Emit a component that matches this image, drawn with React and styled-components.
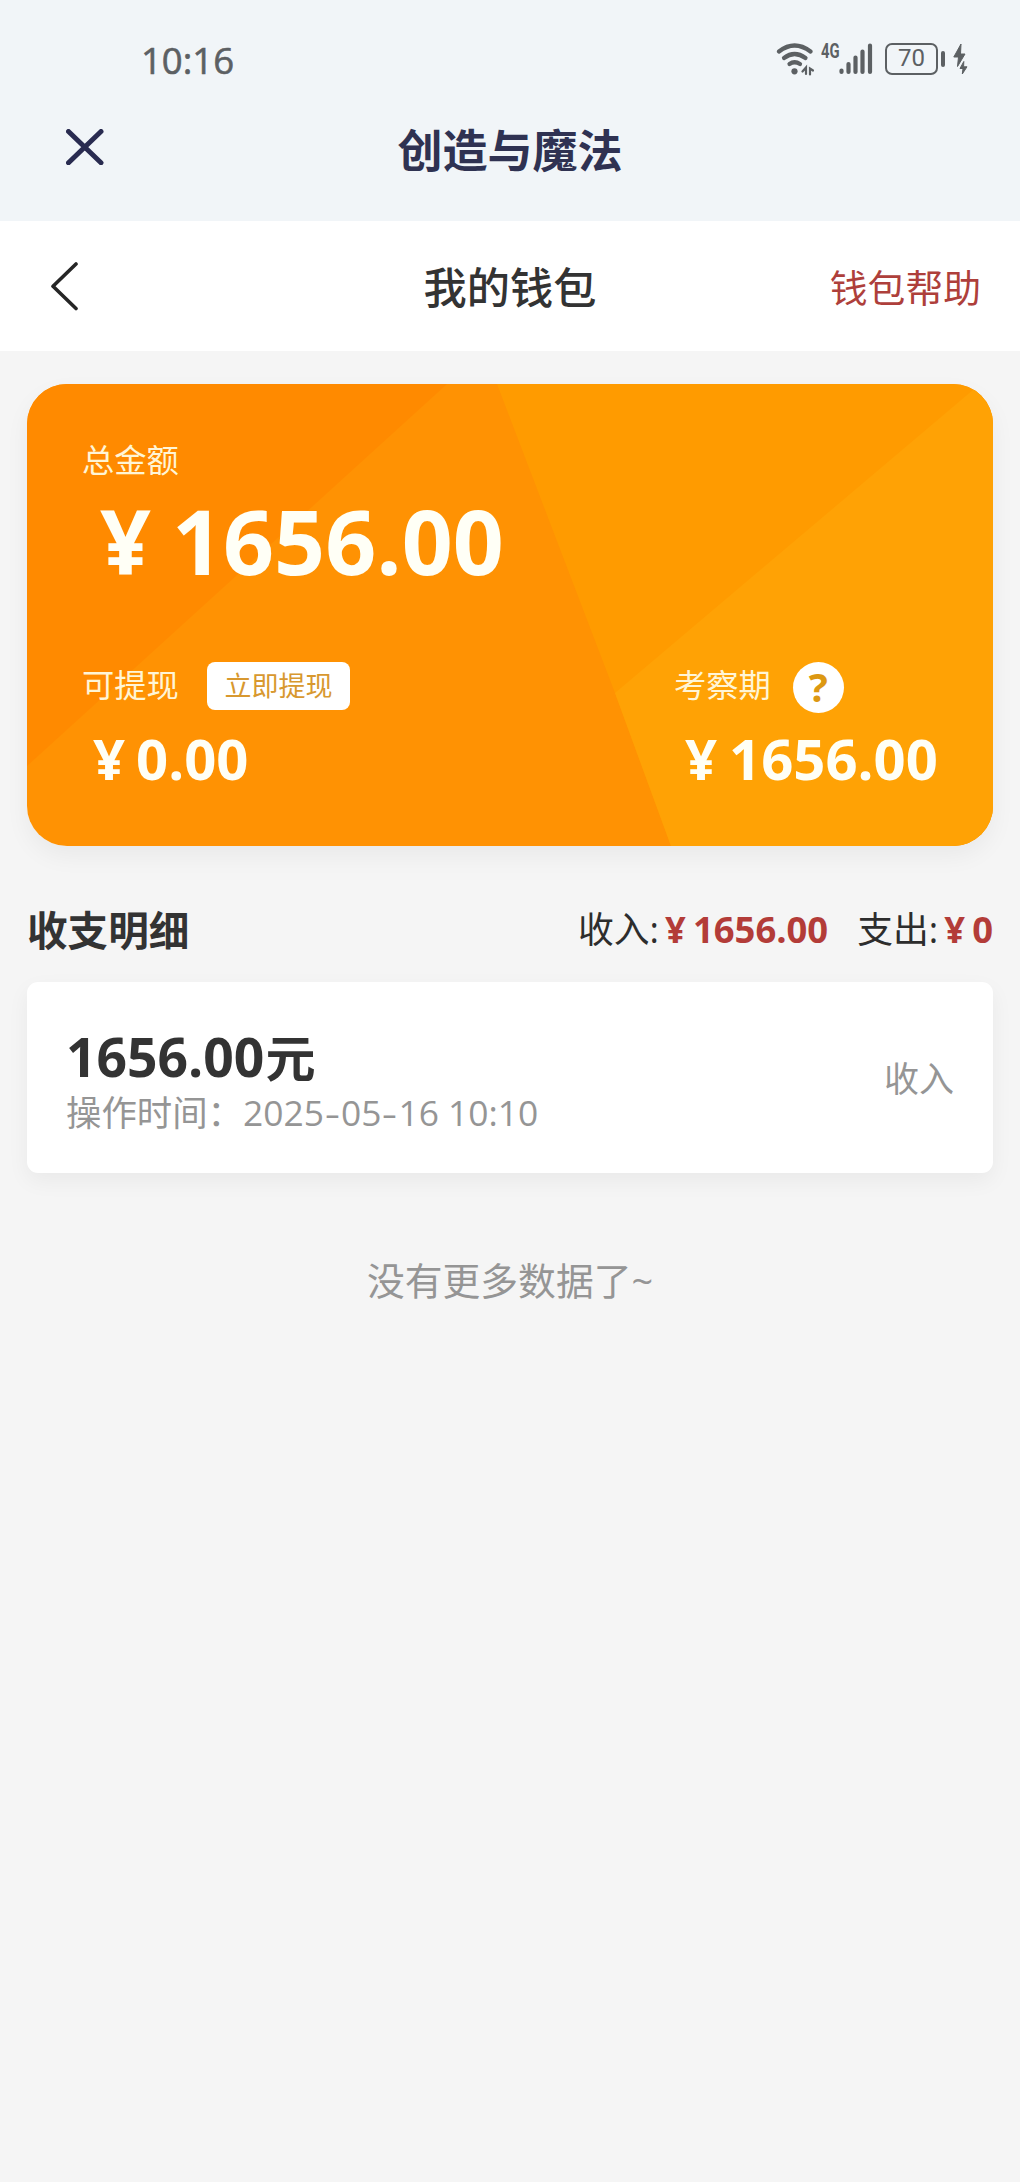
import React from "react";
import styled, { createGlobalStyle } from "styled-components";

const GlobalStyle = createGlobalStyle`
  *, *::before, *::after { box-sizing: border-box; }
  body {
    margin: 0;
    background: #f5f5f5;
    font-family: "Open Sans", "Noto Sans CJK SC", sans-serif;
    color: #333;
  }
`;

const Page = styled.div`
  width: 1020px;
  min-height: 2182px;
  background: #f5f5f5;
  white-space: nowrap;
`;

const AppHeader = styled.header`
  height: 221px;
  background: #f1f5f8;
`;

const StatusBar = styled.div`
  display: flex;
  justify-content: space-between;
  align-items: center;
  height: 82px;
  padding: 38px 51px 0 141px;
  color: #5c6063;
`;

const Clock = styled.div`
  font-size: 36.5px;
  line-height: 44px;
  -webkit-text-stroke: 0.6px #5c6063;
`;

const StatusIcons = styled.div`
  display: flex;
  align-items: flex-start;
  height: 37px;
  svg { display: block; }
`;

const NetworkLabel = styled.span`
  width: 18px;
  margin: -1px 0 0 7px;
  font: 700 20px/20px Roboto, sans-serif;
  transform: scaleX(0.74);
  transform-origin: left center;
`;

const Battery = styled.div`
  display: flex;
  align-items: center;
  justify-content: center;
  width: 53px;
  height: 32px;
  margin: 1px 3px 0 12px;
  border: 2.8px solid #5c6063;
  border-radius: 7px;
  font: 400 24px/27px Roboto, sans-serif;
`;

const BatteryTip = styled.span`
  width: 4px;
  height: 16px;
  margin: 9px 8px 0 0;
  border-radius: 2px;
  background: #5c6063;
`;

const TitleBar = styled.div`
  display: grid;
  grid-template-columns: 120px 1fr 120px;
  align-items: center;
  height: 136px;
`;

const CloseButton = styled.button`
  width: 38px;
  height: 36px;
  margin: -6px 0 0 66px;
  padding: 0;
  border: 0;
  background: none;
  svg { display: block; }
`;

const AppTitle = styled.h1`
  margin: 1px 0 0;
  font-size: 45px;
  font-weight: 700;
  line-height: 64px;
  text-align: center;
  color: #2f3252;
`;

const NavBar = styled.nav`
  display: grid;
  grid-template-columns: 300px 1fr 300px;
  align-items: center;
  height: 130px;
  background: #fff;
`;

const BackButton = styled(CloseButton)`
  width: 28px;
  height: 50px;
  margin: 0 0 0 50px;
`;

const NavTitle = styled.h2`
  margin: 3px 0 0;
  font-size: 43.2px;
  font-weight: 500;
  line-height: 60px;
  text-align: center;
  color: #333;
`;

const HelpLink = styled.a`
  margin-top: 3px;
  padding-right: 39px;
  font-size: 37.8px;
  line-height: 56px;
  text-align: right;
  color: #ae3f3b;
`;

const Content = styled.main`
  padding: 33px 27px 0;
`;

const BalanceCard = styled.section`
  position: relative;
  height: 462px;
  padding: 51px 53px 0 55px;
  border-radius: 40px;
  overflow: hidden;
  background: #ff9203;
  color: #fffff6;
`;

const CardShadow = styled.div`
  border-radius: 40px;
  box-shadow: 0 10px 24px rgba(0, 0, 0, 0.05);
`;

const CardArt = styled.svg`
  position: absolute;
  inset: 0;
`;

const CardBody = styled.div`
  position: relative;
`;

const Label = styled.div`
  font-size: 32.3px;
  line-height: 48px;
  color: #fff5d6;
`;

const Money = styled.div`
  display: flex;
  font-size: ${(p) => p.$size}px;
  line-height: ${(p) => p.$line}px;
  font-weight: 700;
  margin-left: ${(p) => p.$indent || 0}px;
`;

const Yen = styled.span`
  display: inline-block;
  width: ${(p) => p.$width}px;
`;

const SplitRow = styled.div`
  display: flex;
  justify-content: space-between;
  margin-top: 61px;
`;

const Column = styled.div`
  width: ${(p) => p.$width}px;
`;

const LabelRow = styled.div`
  display: flex;
  align-items: flex-start;
  gap: ${(p) => p.$gap}px;
  height: 63px;
`;

const WithdrawButton = styled.button`
  width: 143px;
  height: 48px;
  margin-top: 2px;
  padding: 0;
  border: 0;
  border-radius: 8px;
  background: #fff;
  font-family: inherit;
  font-size: 27px;
  line-height: 48px;
  color: #d8982f;
`;

const HelpBadge = styled.span`
  width: 51px;
  height: 51px;
  margin-top: 2px;
  border-radius: 50%;
  background: #fff;
  font-size: 40px;
  font-weight: 700;
  line-height: 49px;
  text-align: center;
  color: #dc9812;
`;

const SectionHead = styled.div`
  display: flex;
  align-items: center;
  justify-content: space-between;
  height: 60px;
  margin-top: 54px;
`;

const SectionTitle = styled.h3`
  margin: 1px 0 0;
  font-size: 40.6px;
  font-weight: 700;
  line-height: 60px;
  color: #333;
`;

const Totals = styled.div`
  display: flex;
  gap: 29px;
  margin-top: -3px;
  font-size: 35.8px;
  line-height: 50px;
  color: #2d2d2d;
`;

const Total = styled.div`
  display: flex;
  align-items: baseline;
`;

const TotalValue = styled.span`
  display: flex;
  margin-left: 6px;
  font-size: 36.4px;
  font-weight: 700;
  color: #b33c38;
`;

const RecordCard = styled.section`
  display: flex;
  align-items: center;
  justify-content: space-between;
  height: 191px;
  margin-top: 22px;
  padding: 0 39px;
  border-radius: 11px;
  background: #fff;
  box-shadow: 0 8px 22px rgba(0, 0, 0, 0.05);
`;

const RecordInfo = styled.div`
  padding-top: 8px;
`;

const Amount = styled.div`
  font-size: 53.4px;
  font-weight: 700;
  line-height: 60px;
  color: #333;
`;

const Unit = styled.span`
  margin-left: 1px;
  font-size: 50px;
`;

const RecordTime = styled.div`
  font-size: 35.4px;
  line-height: 48px;
  color: #959595;
`;

const Dash = styled.span`
  display: inline-block;
  width: 17px;
  text-align: center;
  transform: scaleX(1.35);
`;

const RecordType = styled.div`
  margin-top: 3px;
  font-size: 35px;
  line-height: 50px;
  color: #959595;
`;

const EndNote = styled.p`
  margin: 80px 0 0;
  font-size: 37.8px;
  line-height: 56px;
  text-align: center;
  color: #959595;
`;

const WifiIcon = () => (
  <svg width="38" height="34" viewBox="776 41 38 34" fill="none" stroke="#5c6063" strokeWidth="4.200" strokeLinecap="round">
    <path d="M779 50.500Q794.500 38.500 810.500 50.500" />
    <path d="M784 57Q794.500 49 805.500 57" />
    <path d="M789.500 63Q794.500 59.500 800 63" />
    <circle cx="794.500" cy="70.300" r="3.100" fill="#5c6063" stroke="none" />
    <path d="M802.500 70.500L806 66.500V73M810 73.500V67.500L813 69.500" strokeWidth="2.200" />
  </svg>
);

const SignalIcon = () => (
  <svg width="34" height="34" viewBox="839.500 41 34 34" stroke="#5c6063" strokeWidth="4.200" strokeLinecap="round">
    <path d="M842 69.500V71M849 63V71M856 56.500V71M863 50.500V71M870.500 44.500V71" />
  </svg>
);

const ChargeIcon = () => (
  <svg width="16" height="34" viewBox="953 41 16 34" fill="#5c6063" stroke="#5c6063" strokeWidth="1" strokeLinejoin="round">
    <path d="M961 43L953.800 56H958.500L957.500 65.500L965 53H960.500Z" />
    <path d="M963.800 60.500L960 67.500H963L962.300 73L967 65.800H963.600Z" />
  </svg>
);

export default function App() {
  return (
    <Page>
      <GlobalStyle />
      <AppHeader>
        <StatusBar>
          <Clock>10:16</Clock>
          <StatusIcons>
            <WifiIcon />
            <NetworkLabel>4G</NetworkLabel>
            <SignalIcon />
            <Battery>70</Battery>
            <BatteryTip />
            <ChargeIcon />
          </StatusIcons>
        </StatusBar>
        <TitleBar>
          <CloseButton aria-label="关闭">
            <svg width="38" height="36" viewBox="0 0 38 36" stroke="#292b50" strokeWidth="5" strokeLinecap="round">
              <path d="M2.500 2.500L35 33.800M35 2.500L2.500 33.800" />
            </svg>
          </CloseButton>
          <AppTitle>创造与魔法</AppTitle>
        </TitleBar>
      </AppHeader>

      <NavBar>
        <BackButton aria-label="返回">
          <svg width="28" height="50" viewBox="0 0 28 50" fill="none" stroke="#262626" strokeWidth="3.600" strokeLinecap="round" strokeLinejoin="round">
            <path d="M26 3L3 25.300L26 47.500" />
          </svg>
        </BackButton>
        <NavTitle>我的钱包</NavTitle>
        <HelpLink>钱包帮助</HelpLink>
      </NavBar>

      <Content>
        <CardShadow>
          <BalanceCard>
            <CardArt width="966" height="462" viewBox="0 0 966 462">
              <path d="M0 0H420L0 382Z" fill="#ff8a00" />
              <path d="M470 0H966V462H644L588 309Z" fill="#ff9b00" />
              <path d="M588 309L953 0H966V462H644Z" fill="#ffa205" />
            </CardArt>
            <CardBody>
              <Label>总金额</Label>
              <Money $size={89.3} $line={116} $indent={18}>
                <Yen $width={72}>¥</Yen>1656.00
              </Money>
              <SplitRow>
                <Column $width={400}>
                  <LabelRow $gap={28}>
                    <Label>可提现</Label>
                    <WithdrawButton>立即提现</WithdrawButton>
                  </LabelRow>
                  <Money $size={56.2} $line={70} $indent={11}>
                    <Yen $width={43}>¥</Yen>0.00
                  </Money>
                </Column>
                <Column $width={266}>
                  <LabelRow $gap={22}>
                    <Label>考察期</Label>
                    <HelpBadge>?</HelpBadge>
                  </LabelRow>
                  <Money $size={56.2} $line={70} $indent={11}>
                    <Yen $width={44}>¥</Yen>1656.00
                  </Money>
                </Column>
              </SplitRow>
            </CardBody>
          </BalanceCard>
        </CardShadow>

        <SectionHead>
          <SectionTitle>收支明细</SectionTitle>
          <Totals>
            <Total>
              收入:
              <TotalValue><Yen $width={28}>¥</Yen>1656.00</TotalValue>
            </Total>
            <Total>
              支出:
              <TotalValue><Yen $width={28}>¥</Yen>0</TotalValue>
            </Total>
          </Totals>
        </SectionHead>

        <RecordCard>
          <RecordInfo>
            <Amount>1656.00<Unit>元</Unit></Amount>
            <RecordTime>
              操作时间：2025<Dash>-</Dash>05<Dash>-</Dash>16 10:10
            </RecordTime>
          </RecordInfo>
          <RecordType>收入</RecordType>
        </RecordCard>

        <EndNote>没有更多数据了~</EndNote>
      </Content>
    </Page>
  );
}
